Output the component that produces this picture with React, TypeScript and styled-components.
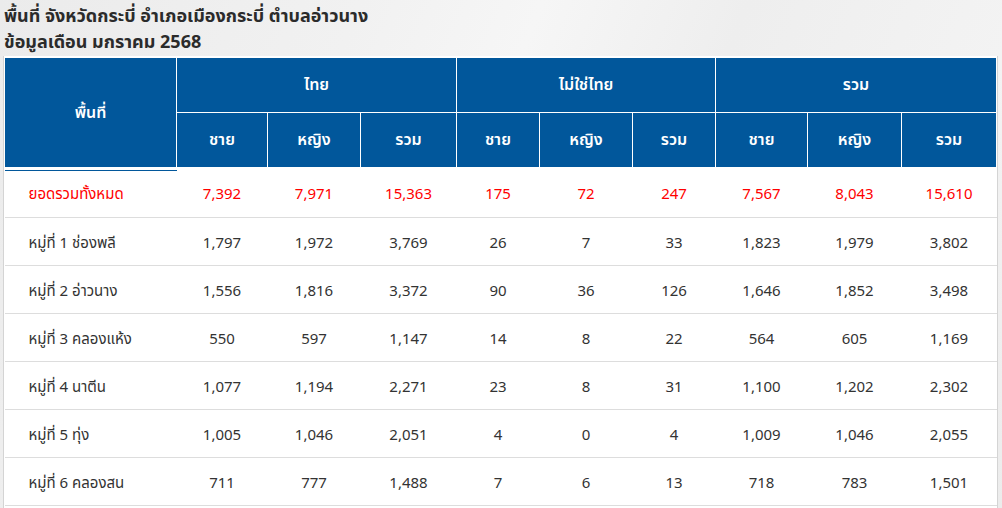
import styled, { createGlobalStyle } from 'styled-components';

const GlobalStyle = createGlobalStyle`
    html, body {
        margin: 0;
        padding: 0;
    }
    body {
        background: linear-gradient(112deg, #ebebeb 0%, #f1f1f1 30%, #f6f6f6 45%, #eeeeee 62%, #f3f3f3 85%, #ececec 100%);
        font-family: 'Noto Sans Thai', 'Noto Sans', 'Liberation Sans', sans-serif;
        color: #333333;
        height: 508px;
        overflow: hidden;
    }
`;

const Heading = styled.h1`
    margin: 0;
    padding: 4px 0 0 4px;
    font-size: 18px;
    line-height: 26px;
    font-weight: 700;
    color: #2b2b2b;
`;

const Panel = styled.div`
    margin-left: 3px;
    width: 993px;
    min-height: 452px;
    padding-top: 1px;
    background: #ffffff;
    border-left: 1px solid #d4d4d4;
    border-right: 1px solid #d4d4d4;
`;

const Table = styled.table`
    border-collapse: collapse;
    table-layout: fixed;
    width: 992px;
`;

const HeadCell = styled.th<{ $area?: boolean }>`
    background-color: #01579b;
    color: #ffffff;
    border: 1px solid #ffffff;
    font-size: 16px;
    font-weight: 600;
    text-align: center;
    padding: 0;
    height: 54px;
    ${(p) => p.$area && 'box-shadow: 0 2px 0 #ffffff, 0 3px 0 #01579b;'}
`;

const Row = styled.tr`
    border-bottom: 1px solid #dddddd;
`;

const Cell = styled.td<{ $total?: boolean; $name?: boolean }>`
    height: ${(p) => (p.$total ? '50px' : '48px')};
    box-sizing: border-box;
    padding: ${(p) => (p.$total ? '4px' : '3px')} 0 0 ${(p) => (p.$name ? '24px' : '0')};
    text-align: ${(p) => (p.$name ? 'left' : 'center')};
    font-size: 15px;
    color: ${(p) => (p.$total ? '#ff0000' : '#333333')};
    white-space: nowrap;
`;

const widths = [172, 91, 93, 96, 83, 93, 83, 92, 94, 95];

const groups = ['ไทย', 'ไม่ใช่ไทย', 'รวม'];
const subs = ['ชาย', 'หญิง', 'รวม'];

const rows: { name: string; values: string[]; total?: boolean }[] = [
    { name: 'ยอดรวมทั้งหมด', total: true, values: ['7,392', '7,971', '15,363', '175', '72', '247', '7,567', '8,043', '15,610'] },
    { name: 'หมู่ที่ 1 ช่องพลี', values: ['1,797', '1,972', '3,769', '26', '7', '33', '1,823', '1,979', '3,802'] },
    { name: 'หมู่ที่ 2 อ่าวนาง', values: ['1,556', '1,816', '3,372', '90', '36', '126', '1,646', '1,852', '3,498'] },
    { name: 'หมู่ที่ 3 คลองแห้ง', values: ['550', '597', '1,147', '14', '8', '22', '564', '605', '1,169'] },
    { name: 'หมู่ที่ 4 นาตีน', values: ['1,077', '1,194', '2,271', '23', '8', '31', '1,100', '1,202', '2,302'] },
    { name: 'หมู่ที่ 5 ทุ่ง', values: ['1,005', '1,046', '2,051', '4', '0', '4', '1,009', '1,046', '2,055'] },
    { name: 'หมู่ที่ 6 คลองสน', values: ['711', '777', '1,488', '7', '6', '13', '718', '783', '1,501'] },
];

const App = () => {
    return (
        <>
            <GlobalStyle />
            <Heading>
                พื้นที่ จังหวัดกระบี่ อำเภอเมืองกระบี่ ตำบลอ่าวนาง
                <br />
                ข้อมูลเดือน มกราคม 2568
            </Heading>
            <Panel>
                <Table>
                    <colgroup>
                        {widths.map((w, i) => (
                            <col key={i} style={{ width: w }} />
                        ))}
                    </colgroup>
                    <thead>
                        <tr>
                            <HeadCell rowSpan={2} $area>
                                พื้นที่
                            </HeadCell>
                            {groups.map((g) => (
                                <HeadCell key={g} colSpan={3}>
                                    {g}
                                </HeadCell>
                            ))}
                        </tr>
                        <tr>
                            {groups.map((g) =>
                                subs.map((s) => <HeadCell key={g + s}>{s}</HeadCell>)
                            )}
                        </tr>
                    </thead>
                    <tbody>
                        {rows.map((r) => (
                            <Row key={r.name}>
                                <Cell $name $total={r.total}>
                                    {r.name}
                                </Cell>
                                {r.values.map((v, i) => (
                                    <Cell key={i} $total={r.total}>
                                        {v}
                                    </Cell>
                                ))}
                            </Row>
                        ))}
                    </tbody>
                </Table>
            </Panel>
        </>
    );
};

export default App;
